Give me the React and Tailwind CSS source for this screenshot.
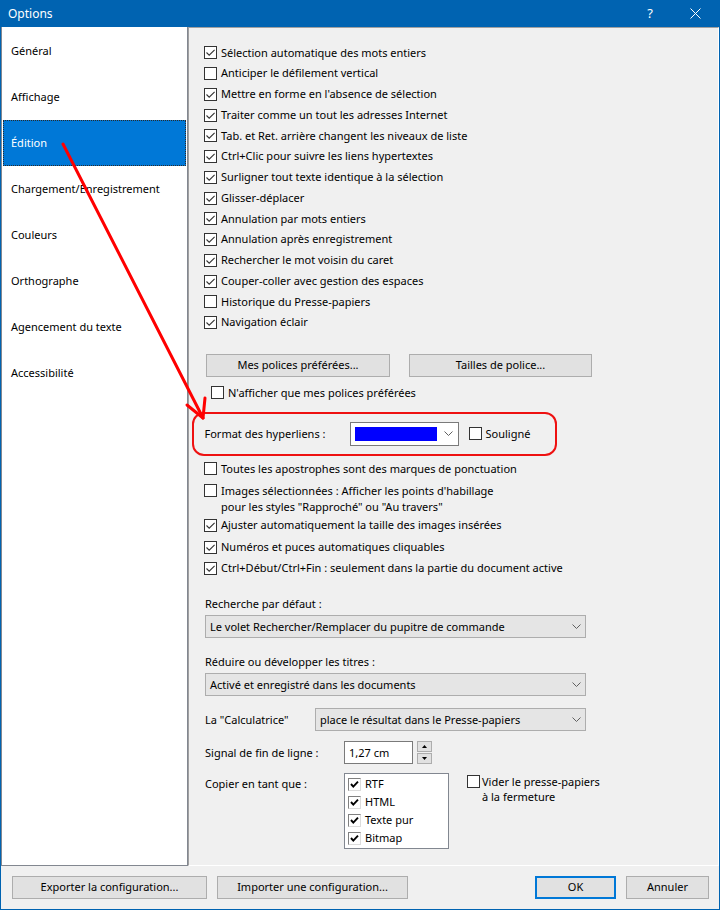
import React from 'react';

const navItems = [
  'Général',
  'Affichage',
  'Édition',
  'Chargement/Enregistrement',
  'Couleurs',
  'Orthographe',
  'Agencement du texte',
  'Accessibilité',
];

const topChecks = [
  [true, 'Sélection automatique des mots entiers'],
  [false, 'Anticiper le défilement vertical'],
  [true, "Mettre en forme en l'absence de sélection"],
  [true, 'Traiter comme un tout les adresses Internet'],
  [true, 'Tab. et Ret. arrière changent les niveaux de liste'],
  [true, 'Ctrl+Clic pour suivre les liens hypertextes'],
  [true, 'Surligner tout texte identique à la sélection'],
  [true, 'Glisser-déplacer'],
  [true, 'Annulation par mots entiers'],
  [true, 'Annulation après enregistrement'],
  [true, 'Rechercher le mot voisin du caret'],
  [true, 'Couper-coller avec gestion des espaces'],
  [false, 'Historique du Presse-papiers'],
  [true, 'Navigation éclair'],
];

function Box({ checked }) {
  return (
    <span className="w-[13px] h-[13px] border border-[#333333] bg-white shrink-0 flex items-center justify-center">
      {checked && (
        <svg width="11" height="11" viewBox="0 0 11 11">
          <path d="M1.5 5.5 L4.2 8.2 L9.6 2.8" fill="none" stroke="#333333" strokeWidth="1.1" />
        </svg>
      )}
    </span>
  );
}

function Check({ checked, children, className = '' }) {
  return (
    <div className={'flex items-center gap-[4px] ' + className}>
      <Box checked={checked} />
      <span className="whitespace-nowrap">{children}</span>
    </div>
  );
}

function Chevron() {
  return (
    <svg width="9" height="5" viewBox="0 0 9 5" className="shrink-0">
      <path d="M0.5 0.5 L4.5 4.5 L8.5 0.5" fill="none" stroke="#606060" strokeWidth="1" />
    </svg>
  );
}

function Select({ children, className = '' }) {
  return (
    <div className={'h-[23px] bg-[#e5e5e5] border border-[#adadad] flex items-center justify-between pl-[4px] pr-[4px] ' + className}>
      <span className="whitespace-nowrap">{children}</span>
      <Chevron />
    </div>
  );
}

function Button({ children, primary, className = '' }) {
  return (
    <div
      className={
        'h-[23px] bg-[#e1e1e1] flex items-center justify-center ' +
        (primary ? 'border-2 border-[#0078d7] ' : 'border border-[#adadad] ') +
        className
      }
    >
      {children}
    </div>
  );
}

function ListCheck({ children }) {
  return (
    <div className="h-[18px] flex items-center gap-[4px] pl-[3px]">
      <span className="w-[13px] h-[13px] bg-white border border-t-[#808080] border-l-[#808080] border-b-[#dcdcdc] border-r-[#dcdcdc] flex items-center justify-center">
        <svg width="9" height="9" viewBox="0 0 9 9">
          <path d="M1 4 L3.3 6.6 L8 1.6" fill="none" stroke="#000000" strokeWidth="1.9" />
        </svg>
      </span>
      <span>{children}</span>
    </div>
  );
}

export default function App() {
  return (
    <div className="relative w-[720px] h-[910px] bg-[#0063b1] flex flex-col font-['Noto_Sans',sans-serif] text-[11px] text-black overflow-hidden">
      {/* title bar */}
      <div className="h-[27px] flex items-center justify-between text-white shrink-0">
        <span className="pl-[8px] text-[12px]">Options</span>
        <div className="flex items-center">
          <span className="w-[40px] text-center text-[13px]">?</span>
          <span className="w-[50px] flex justify-center">
            <svg width="11" height="11" viewBox="0 0 11 11">
              <path d="M0.5 0.5 L10.5 10.5 M10.5 0.5 L0.5 10.5" stroke="#ffffff" strokeWidth="1" />
            </svg>
          </span>
        </div>
      </div>

      <div className="mx-[1px] mb-[1px] flex-1 bg-[#f0f0f0] flex flex-col">
        <div className="h-[839px] flex">
          {/* nav */}
          <div className="w-[187px] bg-white border-l border-r border-b border-[#828790] pt-[1px]">
            {navItems.map((item) => (
              <div
                key={item}
                className={
                  'h-[46px] mx-[1px] flex items-center pl-[7px] ' +
                  (item === 'Édition'
                    ? 'bg-[#0078d7] text-white border border-dotted border-[#2a2a2a]'
                    : 'border border-transparent')
                }
              >
                {item}
              </div>
            ))}
          </div>

          {/* content */}
          <div className="flex-1 border-t border-l border-t-[#a0a0a0] border-l-[#a0a0a0] border-r border-b border-r-white border-b-white pt-[14.5px] pl-[15px]">
            {topChecks.map(([c, t]) => (
              <Check key={t} checked={c} className="h-[20.75px]">
                {t}
              </Check>
            ))}

            <div className="flex gap-[19px] mt-[21px] ml-[2px]">
              <Button className="w-[184px]">Mes polices préférées...</Button>
              <Button className="w-[183px]">Tailles de police...</Button>
            </div>

            <Check className="h-[20.75px] mt-[5.5px] ml-[7px]">N'afficher que mes polices préférées</Check>

            <div className="mt-[8.5px] -ml-[12px] w-[365px] h-[44px] border-[2.5px] border-[#ee1111] rounded-[12px] flex items-center pl-[10.5px]">
              <span className="w-[145px]">Format des hyperliens :</span>
              <div className="w-[109px] h-[24px] bg-white border border-[#7a7a7a] flex items-center pl-[4px] pr-[5px] justify-between">
                <span className="w-[82px] h-[14px] bg-[#0000ff]" />
                <Chevron />
              </div>
              <Check className="ml-[10px] gap-[3px]">Souligné</Check>
            </div>

            <Check className="h-[21px] mt-[2.5px]">Toutes les apostrophes sont des marques de ponctuation</Check>
            <div className="flex items-start gap-[4px] mt-[3.5px] h-[32px] leading-[16px]">
              <span className="mt-[1.5px]">
                <Box />
              </span>
              <span className="whitespace-nowrap">
                Images sélectionnées : Afficher les points d'habillage
                <br />
                pour les styles "Rapproché" ou "Au travers"
              </span>
            </div>
            <Check checked className="h-[21.5px]">Ajuster automatiquement la taille des images insérées</Check>
            <Check checked className="h-[21.5px]">Numéros et puces automatiques cliquables</Check>
            <Check checked className="h-[21.5px]">Ctrl+Début/Ctrl+Fin : seulement dans la partie du document active</Check>

            <div className="pl-[1px]">
              <div className="mt-[17px] h-[16px] leading-[16px]">Recherche par défaut :</div>
              <Select className="mt-[3px] w-[381px]">Le volet Rechercher/Remplacer du pupitre de commande</Select>

              <div className="mt-[16px] h-[16px] leading-[16px]">Réduire ou développer les titres :</div>
              <Select className="mt-[3px] w-[381px]">Activé et enregistré dans les documents</Select>

              <div className="mt-[12px] flex items-center">
                <span className="w-[110px]">La "Calculatrice"</span>
                <Select className="w-[271px]">place le résultat dans le Presse-papiers</Select>
              </div>

              <div className="mt-[10px] flex items-center">
                <span className="w-[139px]">Signal de fin de ligne :</span>
                <div className="w-[69px] h-[23px] bg-white border border-[#7a7a7a] flex items-center pl-[4px]">1,27 cm</div>
                <div className="ml-[4px] w-[15px] h-[23px] flex flex-col gap-[1px]">
                  <div className="flex-1 bg-[#e1e1e1] border border-[#adadad] flex items-center justify-center">
                    <svg width="5" height="3" viewBox="0 0 5 3">
                      <path d="M0 3 L2.5 0 L5 3 Z" fill="#000" />
                    </svg>
                  </div>
                  <div className="flex-1 bg-[#e1e1e1] border border-[#adadad] flex items-center justify-center">
                    <svg width="5" height="3" viewBox="0 0 5 3">
                      <path d="M0 0 L2.5 3 L5 0 Z" fill="#000" />
                    </svg>
                  </div>
                </div>
              </div>

              <div className="mt-[9px] flex items-start">
                <span className="w-[139px] pt-[3px]">Copier en tant que :</span>
                <div className="w-[105px] h-[76px] bg-white border border-[#828790] pt-[1px]">
                  <ListCheck>RTF</ListCheck>
                  <ListCheck>HTML</ListCheck>
                  <ListCheck>Texte pur</ListCheck>
                  <ListCheck>Bitmap</ListCheck>
                </div>
                <div className="ml-[18px] mt-[1.5px] flex items-start gap-[2px] leading-[15px]">
                  <span>
                    <Box />
                  </span>
                  <span className="-mt-[0.5px]">
                    Vider le presse-papiers
                    <br />à la fermeture
                  </span>
                </div>
              </div>
            </div>
          </div>
        </div>

        {/* footer */}
        <div className="flex items-start pt-[10px] pl-[11px] pr-[10px]">
          <Button className="w-[195px]">Exporter la configuration...</Button>
          <Button className="w-[191px] ml-[10px]">Importer une configuration...</Button>
          <div className="flex-1" />
          <Button primary className="w-[81px]">OK</Button>
          <Button className="w-[83px] ml-[10px]">Annuler</Button>
        </div>
      </div>

      {/* annotation arrow */}
      <svg className="absolute left-0 top-0 pointer-events-none" width="720" height="910" viewBox="0 0 720 910">
        <path d="M63 144 L203 418" stroke="#ff0000" strokeWidth="3" strokeLinecap="round" fill="none" />
        <path d="M187 405 L203 418 L205 398" stroke="#ff0000" strokeWidth="3" strokeLinecap="round" strokeLinejoin="round" fill="none" />
      </svg>
    </div>
  );
}
